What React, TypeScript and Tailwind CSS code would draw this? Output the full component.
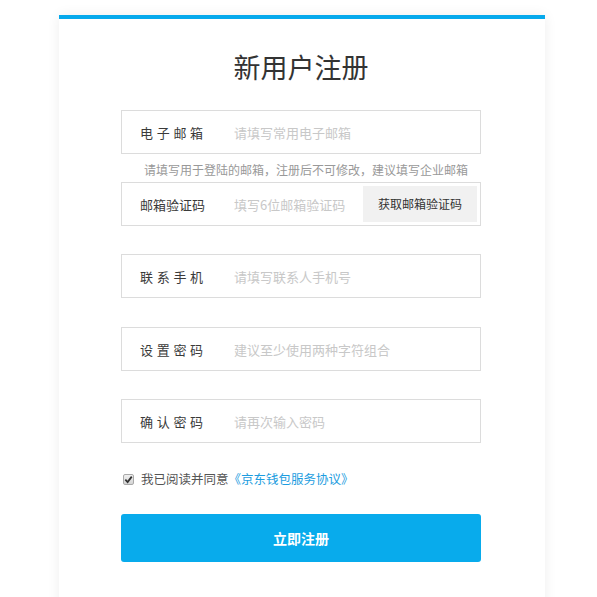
import { useState } from "react";

const font = { fontFamily: '"Noto Sans CJK SC", "Noto Sans", sans-serif' };

type Field = {
  label: string;
  placeholder: string;
  spaced?: boolean;
  hint?: string;
  action?: string;
  type?: string;
  gap?: string;
};

const fields: Field[] = [
  {
    label: "电子邮箱",
    placeholder: "请填写常用电子邮箱",
    spaced: true,
    hint: "请填写用于登陆的邮箱，注册后不可修改，建议填写企业邮箱",
  },
  { label: "邮箱验证码", placeholder: "填写6位邮箱验证码", action: "获取邮箱验证码" },
  { label: "联系手机", placeholder: "请填写联系人手机号", spaced: true, gap: "h-[29px]" },
  { label: "设置密码", placeholder: "建议至少使用两种字符组合", spaced: true, type: "password" },
  { label: "确认密码", placeholder: "请再次输入密码", spaced: true, type: "password" },
];

function InputRow({ field }: { field: Field }) {
  return (
    <div className="flex h-[44px] w-[360px] items-center border border-[#dcdcdc] bg-white pl-[18px] pr-[3px]">
      <span
        className={
          "w-[94px] shrink-0 text-[13px] leading-none text-[#3a3a3a] " +
          (field.spaced ? "tracking-[3.7px]" : "")
        }
      >
        {field.label}
      </span>
      <input
        type={field.type ?? "text"}
        placeholder={field.placeholder}
        className="h-full min-w-0 flex-1 bg-transparent text-[13px] text-[#333] outline-none placeholder:text-[#c8c8c8]"
        style={font}
      />
      {field.action && (
        <button className="flex h-[36px] w-[114px] shrink-0 items-center justify-center bg-[#f1f1f1] text-[12px] text-[#333]">
          {field.action}
        </button>
      )}
    </div>
  );
}

export default function App() {
  const [agreed, setAgreed] = useState(true);

  return (
    <div className="min-h-[597px] overflow-hidden bg-white pt-[15px]" style={font}>
      <div className="ml-[59px] w-[486px] border-t-4 border-[#06a9ec] bg-white pb-[60px] shadow-[0_0_12px_rgba(0,0,0,0.07)]">
        <h1 className="pt-[28px] pl-[62px] w-[422px] text-center text-[27px] leading-[40px] text-[#333]">
          新用户注册
        </h1>

        <form className="mt-[23px] flex flex-col pl-[62px]" onSubmit={(e) => e.preventDefault()}>
          {fields.map((f) => (
            <div key={f.label} className="flex flex-col">
              <InputRow field={f} />
              {f.hint ? (
                <p className="h-[28px] w-[360px] pl-[10px] pt-[8px] text-center text-[12px] leading-[16px] text-[#999]">
                  {f.hint}
                </p>
              ) : (
                <div className={f.gap ?? "h-[28px]"} />
              )}
            </div>
          ))}

          <label className="mt-[-2px] flex h-[20px] cursor-pointer items-center pl-[2px] text-[12.5px] text-[#555]">
            <span
              onClick={() => setAgreed(!agreed)}
              className="flex h-[11px] w-[11px] items-center justify-center rounded-[2px] border border-[#a9a9a9] bg-gradient-to-b from-[#f0f0f0] to-[#d4d4d4]"
            >
              {agreed && (
                <svg viewBox="0 0 10 10" className="h-[9px] w-[9px]">
                  <path d="M1.5 5.2 L4 7.8 L8.6 1.8" fill="none" stroke="#333" strokeWidth="2" />
                </svg>
              )}
            </span>
            <span className="ml-[7px]">我已阅读并同意</span>
            <a className="text-[#1d9de0]">《京东钱包服务协议》</a>
          </label>

          <button
            type="submit"
            className="mt-[25px] h-[48px] w-[360px] rounded-[3px] bg-[#08abec] text-[14px] font-bold text-white"
          >
            立即注册
          </button>
        </form>
      </div>
    </div>
  );
}
